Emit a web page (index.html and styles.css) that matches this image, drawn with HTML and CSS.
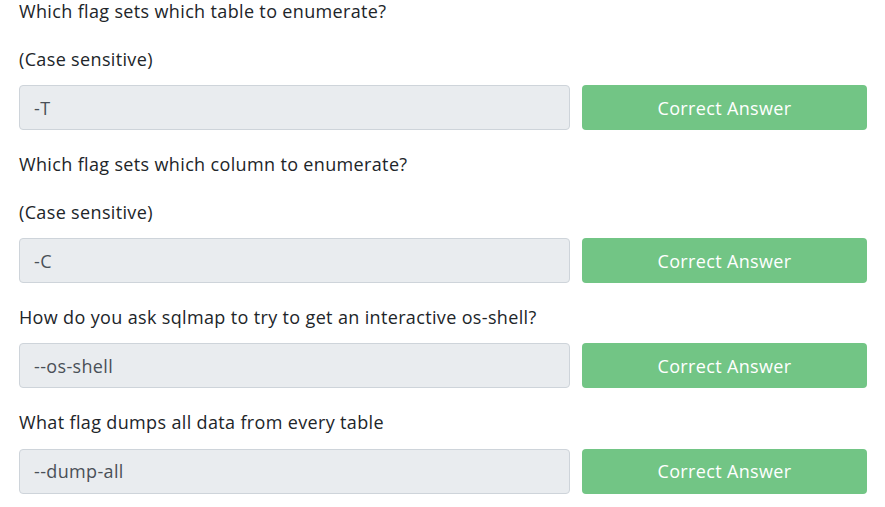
FILE: index.html
```html
<!DOCTYPE html>
<html lang="en">
<head>
<meta charset="utf-8">
<title>Questions</title>
<link rel="stylesheet" href="styles.css">
</head>
<body>
<main class="tasks">
  <section class="task">
    <p class="question">Which flag sets which table to enumerate?</p>
    <p class="note">(Case sensitive)</p>
    <div class="answer-row">
      <div class="answer-input">-T</div>
      <button class="answer-btn">Correct Answer</button>
    </div>
  </section>
  <section class="task">
    <p class="question">Which flag sets which column to enumerate?</p>
    <p class="note">(Case sensitive)</p>
    <div class="answer-row">
      <div class="answer-input">-C</div>
      <button class="answer-btn">Correct Answer</button>
    </div>
  </section>
  <section class="task">
    <p class="question">How do you ask sqlmap to try to get an interactive os-shell?</p>
    <div class="answer-row">
      <div class="answer-input">--os-shell</div>
      <button class="answer-btn">Correct Answer</button>
    </div>
  </section>
  <section class="task">
    <p class="question">What flag dumps all data from every table</p>
    <div class="answer-row">
      <div class="answer-input">--dump-all</div>
      <button class="answer-btn">Correct Answer</button>
    </div>
  </section>
</main>
</body>
</html>
```
FILE: styles.css
```css
html, body {
  margin: 0;
  padding: 0;
  background: #ffffff;
}
body {
  font-family: "Open Sans", "Lato", sans-serif;
  font-size: 18px;
  letter-spacing: 0.35px;
  color: #212529;
}
.tasks {
  padding: 0 18px 0 19px;
  margin-top: -2px;
  display: flex;
  flex-direction: column;
  gap: 21px;
}
.task {
  display: flex;
  flex-direction: column;
}
.question, .note {
  margin: 0 0 13px 0;
  line-height: 26.4px;
}
.question + .note {
  margin-top: 8.2px;
}
.answer-row {
  display: flex;
  gap: 12px;
  height: 45px;
}
.answer-input {
  flex: 1;
  box-sizing: border-box;
  background: #e9ecef;
  border: 1px solid #ced4da;
  border-radius: 4px;
  padding: 0 14px;
  display: flex;
  align-items: center;
  color: #495057;
  font-size: 18px;
}
.answer-btn {
  width: 285px;
  box-sizing: border-box;
  border: none;
  border-radius: 4px;
  background: #72c585;
  color: #ffffff;
  font-family: inherit;
  font-size: 18px;
  letter-spacing: 0.35px;
  padding: 0;
}
```
